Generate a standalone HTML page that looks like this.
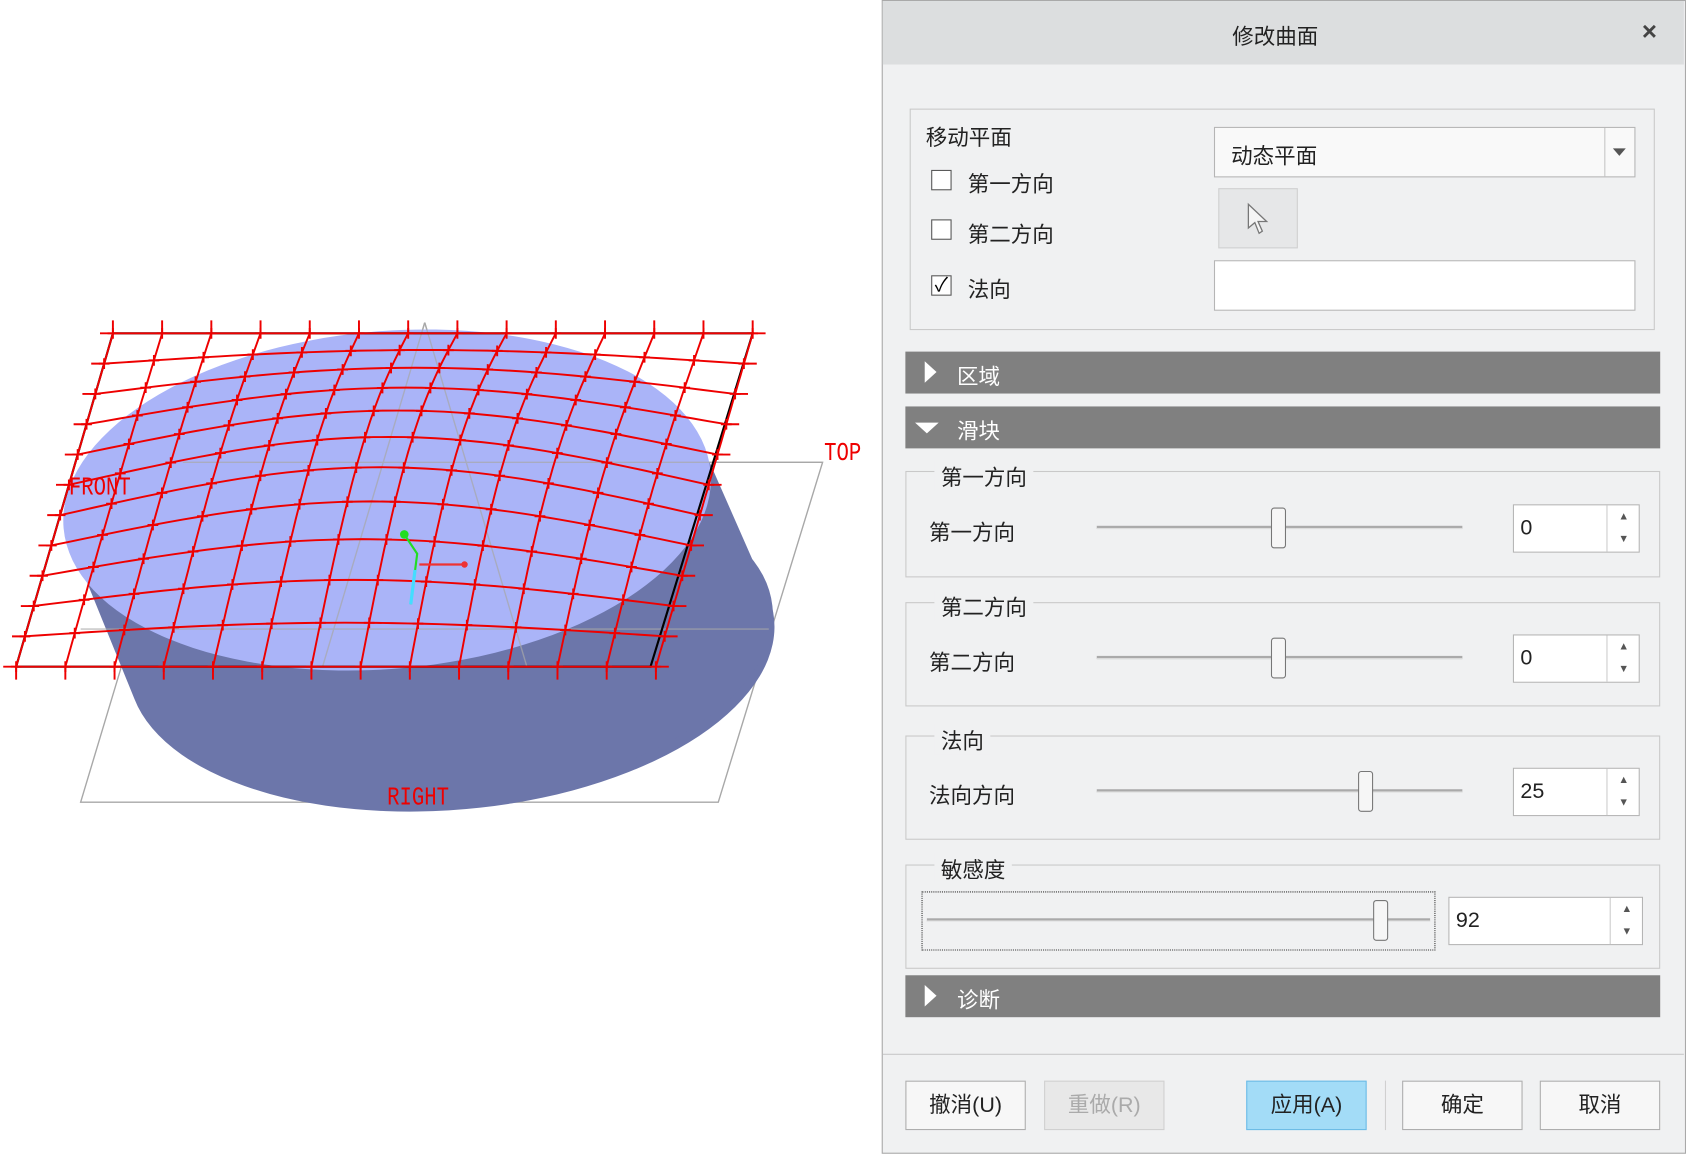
<!DOCTYPE html>
<html><head><meta charset="utf-8"><style>
body{margin:0;width:1686px;height:1154px;overflow:hidden;background:#fff;font-family:"Liberation Sans","Noto Sans CJK SC",sans-serif}
#w{position:absolute;left:0;top:0;width:1568px;height:1073px;transform:scale(1.07526);transform-origin:0 0}
.a{position:absolute}
.dlg{left:820px;top:0;width:746px;height:1071px;border:1px solid #a9a9a9;background:#f0f1f2}
.t{font-size:20px;color:#222}
.box{border:1px solid #c9c9c9;box-sizing:border-box}
.cb{width:19px;height:19px;border:1px solid #555;background:#fff;box-sizing:border-box}
.bar{left:842px;width:702px;height:39px;background:#808080;color:#fff;font-size:20px}
.bar span{position:absolute;left:48px;top:7px}
.inp{background:#fff;border:1px solid #b5b5b5;box-sizing:border-box}
.btn{top:1005px;height:46px;width:112px;border:1px solid #adadad;background:#f7f7f7;box-sizing:border-box;font-size:20px;text-align:center;line-height:44px;color:#222}
.lbl{background:#f0f1f2;padding:0 6px;font-size:20px;color:#222}
.trk{height:2px;background:#aaa;border-bottom:1px solid #ddd}
.th{width:14px;height:38px;border:1px solid #777;border-radius:3px;background:#f6f6f6;box-sizing:border-box}
.spin{width:30px;border-left:1px solid #ccc;font-size:10px;color:#555;text-align:center}
</style></head><body><div id="w">
<svg class="a" style="left:0;top:0" width="820" height="800" id="sv">
<g fill="none" stroke="#a8a8a8" stroke-width="1.3">
<polygon points="75,746 170,430 765,430 668,746"/>
<polyline points="395,300 300,620 365,746"/>
<polyline points="395,300 490,620 420,746"/>
<line x1="120" y1="585" x2="715" y2="585"/>
</g>
<path d="M60,490 L125,650 A300,150 -5 0 0 715,555 L660,430 Z" fill="#6c76aa"/>
<ellipse cx="420" cy="595" rx="300" ry="150" transform="rotate(-6 420 595)" fill="#6c76aa"/>
<ellipse cx="360" cy="465" rx="302" ry="157" transform="rotate(-5 360 465)" fill="#aab4f8"/>
<g fill="none" stroke="#a8a8a8" stroke-width="1.3" opacity=".7">
<line x1="170" y1="430" x2="765" y2="430"/><line x1="75" y1="585" x2="715" y2="585"/>
<polyline points="395,300 300,620"/><polyline points="395,300 490,620"/>
</g>
<polygon points="105,310 700,310 605,620 15,620" fill="none" stroke="#000" stroke-width="2"/>
<g id="mesh" fill="none" stroke="#e00" stroke-width="1.8"></g>
<path d="M376,497 L388,515 L382,562" stroke="#2d2" stroke-width="2" fill="none"/>
<path d="M386,530 L382,562" stroke="#4df" stroke-width="3" fill="none"/>
<circle cx="376" cy="497" r="4" fill="#2d2"/>
<line x1="390" y1="525" x2="432" y2="525" stroke="#e33" stroke-width="2"/><circle cx="432" cy="525" r="3" fill="#e33"/>
<g font-family="Liberation Mono,monospace" font-size="24" fill="#e00" transform="scale(0.8,1)">
<text x="958" y="428">TOP</text><text x="80" y="460">FRONT</text><text x="450" y="748">RIGHT</text></g>
</svg>
<script>
(function(){var g=document.getElementById('mesh'),s='';
function P(u,v){var x0=105+(15-105)*v,x=x0+595*u,y=310+310*v;var b=Math.sin(Math.PI*u)*Math.sin(Math.PI*v);return [x+ (u-0.5)*-20*b,y-45*b];}
var N=11,M=13;
for(var i=0;i<=N;i++){var v=i/N,d='';for(var k=0;k<=40;k++){var p=P(k/40,v);d+=(k?'L':'M')+p[0].toFixed(1)+','+p[1].toFixed(1);}
var a=P(0,v),b=P(1,v);d+='M'+(a[0]-12)+','+a[1]+'L'+a[0]+','+a[1]+'M'+b[0]+','+b[1]+'L'+(b[0]+12)+','+b[1];s+='<path d="'+d+'"/>';}
for(var j=0;j<=M;j++){var u=j/M,d='';for(var k=0;k<=40;k++){var p=P(u,k/40);d+=(k?'L':'M')+p[0].toFixed(1)+','+p[1].toFixed(1);}
var a=P(u,0),b=P(u,1);d+='M'+a[0]+','+(a[1]-12)+'L'+a[0]+','+a[1]+'M'+b[0]+','+b[1]+'L'+b[0]+','+(b[1]+12);s+='<path d="'+d+'"/>';
for(var i=0;i<=N;i++){var p=P(u,i/N);s+='<path d="M'+(p[0]-5)+','+p[1]+'L'+(p[0]+5)+','+p[1]+'M'+p[0]+','+(p[1]-5)+'L'+p[0]+','+(p[1]+5)+'"/>';}}
g.innerHTML=s;})();
</script>

<div class="a dlg"></div>
<div class="a" style="left:821px;top:1px;width:745px;height:59px;background:#dcdedf"></div>
<div class="a t" style="left:1146px;top:18px">修改曲面</div>
<div class="a" style="left:1527px;top:16px;font-size:24px;font-weight:bold;color:#444">×</div>

<div class="a box" style="left:846px;top:101px;width:693px;height:206px"></div>
<div class="a t" style="left:861px;top:112px">移动平面</div>
<div class="a cb" style="left:866px;top:158px"></div><div class="a t" style="left:900px;top:155px">第一方向</div>
<div class="a cb" style="left:866px;top:204px"></div><div class="a t" style="left:900px;top:202px">第二方向</div>
<div class="a cb" style="left:866px;top:256px;font-size:18px;line-height:16px;text-align:center">✓</div><div class="a t" style="left:900px;top:253px">法向</div>
<div class="a inp" style="left:1129px;top:118px;width:392px;height:47px;background:#f9f9f9"></div>
<div class="a t" style="left:1145px;top:129px">动态平面</div>
<div class="a" style="left:1492px;top:119px;width:1px;height:45px;background:#c5c5c5"></div>
<div class="a" style="left:1500px;top:138px;width:0;height:0;border-left:6px solid transparent;border-right:6px solid transparent;border-top:7px solid #555"></div>
<div class="a" style="left:1133px;top:175px;width:74px;height:56px;background:#e6e7e8;border:1px solid #d0d0d0;box-sizing:border-box"></div>
<svg class="a" style="left:1158px;top:188px" width="24" height="32"><path d="M3,2 L3,24 L9,19 L13,29 L16,27 L12,18 L20,18 Z" fill="#f5f5f5" stroke="#777" stroke-width="1.2"/></svg>
<div class="a inp" style="left:1129px;top:242px;width:392px;height:47px"></div>

<div class="a bar" style="top:327px"><span>区域</span></div>
<div class="a" style="left:860px;top:336px;border-top:10px solid transparent;border-bottom:10px solid transparent;border-left:11px solid #fff"></div>
<div class="a bar" style="top:378px"><span>滑块</span></div>
<div class="a" style="left:851px;top:393px;border-left:11px solid transparent;border-right:11px solid transparent;border-top:10px solid #fff"></div>

<div class="a box" style="left:842px;top:438px;width:702px;height:99px"></div>
<div class="a lbl" style="left:869px;top:428px">第一方向</div>
<div class="a t" style="left:864px;top:479px">第一方向</div>
<div class="a trk" style="left:1020px;top:489px;width:340px"></div>
<div class="a th" style="left:1182px;top:472px"></div>
<div class="a inp" style="left:1407px;top:469px;width:118px;height:45px"></div>
<div class="a t" style="left:1414px;top:480px">0</div>
<div class="a spin" style="left:1494px;top:470px;height:43px;line-height:21px">▲<br>▼</div>

<div class="a box" style="left:842px;top:560px;width:702px;height:97px"></div>
<div class="a lbl" style="left:869px;top:549px">第二方向</div>
<div class="a t" style="left:864px;top:600px">第二方向</div>
<div class="a trk" style="left:1020px;top:610px;width:340px"></div>
<div class="a th" style="left:1182px;top:593px"></div>
<div class="a inp" style="left:1407px;top:590px;width:118px;height:45px"></div>
<div class="a t" style="left:1414px;top:601px">0</div>
<div class="a spin" style="left:1494px;top:591px;height:43px;line-height:21px">▲<br>▼</div>

<div class="a box" style="left:842px;top:684px;width:702px;height:97px"></div>
<div class="a lbl" style="left:869px;top:673px">法向</div>
<div class="a t" style="left:864px;top:724px">法向方向</div>
<div class="a trk" style="left:1020px;top:734px;width:340px"></div>
<div class="a th" style="left:1263px;top:717px"></div>
<div class="a inp" style="left:1407px;top:714px;width:118px;height:45px"></div>
<div class="a t" style="left:1414px;top:725px">25</div>
<div class="a spin" style="left:1494px;top:715px;height:43px;line-height:21px">▲<br>▼</div>

<div class="a box" style="left:842px;top:804px;width:702px;height:97px"></div>
<div class="a lbl" style="left:869px;top:793px">敏感度</div>
<div class="a" style="left:857px;top:829px;width:478px;height:55px;border:1px dotted #333;box-sizing:border-box"></div>
<div class="a trk" style="left:862px;top:854px;width:468px"></div>
<div class="a th" style="left:1277px;top:837px"></div>
<div class="a inp" style="left:1347px;top:834px;width:181px;height:45px"></div>
<div class="a t" style="left:1354px;top:845px">92</div>
<div class="a spin" style="left:1497px;top:835px;height:43px;line-height:21px">▲<br>▼</div>

<div class="a bar" style="top:907px"><span>诊断</span></div>
<div class="a" style="left:860px;top:916px;border-top:10px solid transparent;border-bottom:10px solid transparent;border-left:11px solid #fff"></div>

<div class="a" style="left:821px;top:980px;width:745px;height:1px;background:#c8c8c8"></div>
<div class="a btn" style="left:842px">撤消(U)</div>
<div class="a btn" style="left:971px;color:#aaa;background:#e8e8e8;border-color:#d0d0d0">重做(R)</div>
<div class="a btn" style="left:1159px;background:#a3dcf7;border-color:#6cbbe6">应用(A)</div>
<div class="a" style="left:1288px;top:1005px;width:1px;height:46px;background:#d0d0d0"></div>
<div class="a btn" style="left:1304px">确定</div>
<div class="a btn" style="left:1432px">取消</div>
</div></body></html>
